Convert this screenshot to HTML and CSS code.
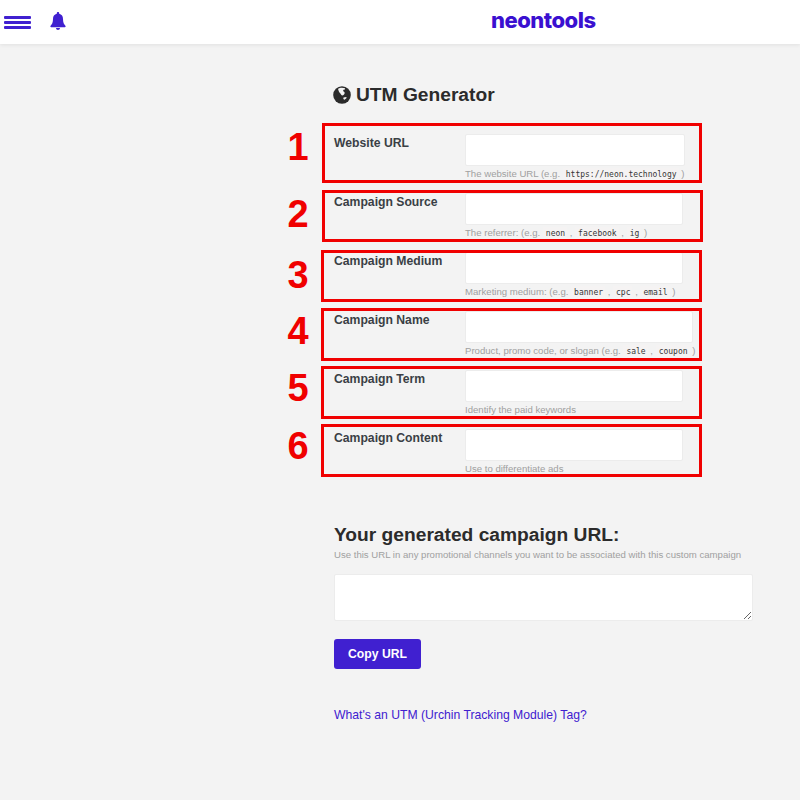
FILE: index.html

```html
<!DOCTYPE html>
<html>
<head>
    <title>UTM Generator - neontools</title>
    <link rel="stylesheet" href="styles.css">
</head>
<body>
    <header class="topbar">
        <div class="menu-icon"><span></span><span></span><span></span></div>
        <svg class="bell" viewBox="0 0 16 18" width="16" height="18">
            <path d="M8 0c-.7 0-1.2.5-1.2 1.2v.6C4.300 2.300 3 4.300 3 7c0 3.600-1 5.300-2.400 6.800-.5.600-.2 1.400.6 1.400h13.600c.8 0 1.100-.8.6-1.400C14 12.300 13 10.600 13 7c0-2.700-1.300-4.700-3.800-5.200v-.6C9.200.5 8.700 0 8 0zM6 16c0 1.100.9 2 2 2s2-.9 2-2z"/>
        </svg>
        <div class="logo">neontools</div>
    </header>

    <main class="content">
        <h1 class="title">
            <svg class="globe" viewBox="0 0 18 18" width="18" height="18">
                <circle cx="9" cy="9" r="8.800" fill="#2b2b2b"/>
                <path fill="#f3f3f3" d="M5 2.800C6.500 1.500 10 1.200 12 2.300c.4 1-.6 1.500-1.600 1.500-.5 1-.2 1.800.9 2.300.8.800.3 2.200-.8 3-1 .6-1.900.3-2.500-.6C7.500 7.300 6.500 7 6 5.800 5.600 4.600 5.200 3.800 5 2.800zM10.500 11.500l2.800-.5.300 1-2 1.800-1.300-.7z"/>
            </svg>
            UTM Generator
        </h1>

        <form class="fields">
            <div class="field">
                <label>Website URL</label>
                <div class="field-body">
                    <input type="text" class="w-220">
                    <p class="help">The website URL (e.g. <code>https://neon.technology</code> )</p>
                </div>
                <div class="mark mark-1"><b>1</b></div>
            </div>
            <div class="field">
                <label>Campaign Source</label>
                <div class="field-body">
                    <input type="text" class="w-218">
                    <p class="help">The referrer: (e.g. <code>neon</code> , <code>facebook</code> , <code>ig</code> )</p>
                </div>
                <div class="mark mark-2"><b>2</b></div>
            </div>
            <div class="field">
                <label>Campaign Medium</label>
                <div class="field-body">
                    <input type="text" class="w-218">
                    <p class="help">Marketing medium: (e.g. <code>banner</code> , <code>cpc</code> , <code>email</code> )</p>
                </div>
                <div class="mark mark-3"><b>3</b></div>
            </div>
            <div class="field">
                <label>Campaign Name</label>
                <div class="field-body">
                    <input type="text" class="w-228">
                    <p class="help">Product, promo code, or slogan (e.g. <code>sale</code> , <code>coupon</code> )</p>
                </div>
                <div class="mark mark-4"><b>4</b></div>
            </div>
            <div class="field">
                <label>Campaign Term</label>
                <div class="field-body">
                    <input type="text" class="w-218">
                    <p class="help">Identify the paid keywords</p>
                </div>
                <div class="mark mark-5"><b>5</b></div>
            </div>
            <div class="field">
                <label>Campaign Content</label>
                <div class="field-body">
                    <input type="text" class="w-218">
                    <p class="help">Use to differentiate ads</p>
                </div>
                <div class="mark mark-6"><b>6</b></div>
            </div>
        </form>

        <section class="result">
            <h2>Your generated campaign URL:</h2>
            <p class="help">Use this URL in any promotional channels you want to be associated with this custom campaign</p>
            <textarea></textarea>
            <button type="button" class="copy-btn">Copy URL</button>
            <a class="utm-link" href="#">What's an UTM (Urchin Tracking Module) Tag?</a>
        </section>
    </main>
</body>
</html>
```

FILE: styles.css

```css
html { background-color: #f3f3f3; }
body { font-family: "Liberation Sans", Arial, sans-serif; margin: 0; background-color: #f3f3f3; color: #363636; overflow: hidden; }

.topbar { position: relative; display: flex; align-items: flex-start; height: 44px; background: white; box-shadow: 0 1px 4px rgba(0,0,0,0.08); }
.menu-icon { display: flex; flex-direction: column; gap: 2px; margin: 16px 0 0 4px; width: 27px; }
.menu-icon span { display: block; height: 3px; background-color: #4020d0; border-radius: 1px; }
.bell { margin: 12px 0 0 19px; fill: #4020d0; }
.logo { margin: 6px 0 0 425px; font-family: Inter, sans-serif; font-weight: 800; font-size: 22px; line-height: 29px; color: #3a10d0; letter-spacing: -0.500px; }

.content { margin-left: 334px; width: 420px; }
.title { display: flex; align-items: center; gap: 5px; margin: 40px 0 0; font-size: 19.200px; line-height: 22px; color: #2b2b2b; }
.globe { flex: none; margin-left: -1px; }

.fields { margin-top: 28px; }
.field { position: relative; display: flex; height: 59px; }
.field label { width: 131px; font-size: 12.200px; font-weight: bold; line-height: 16px; margin-top: 1px; color: #3a3f45; }
.field-body { flex: 1; }
.field input { display: block; box-sizing: border-box; height: 32px; margin: 0; padding: 0 8px; border: 1px solid #ececec; border-radius: 2px; background: white; box-shadow: none; }
.w-218 { width: 218px; }
.w-220 { width: 220px; }
.w-228 { width: 228px; }

.help { margin: 0; font-size: 9.600px; line-height: 16px; color: #a0a0a0; white-space: nowrap; }
code { font-family: "DejaVu Sans Mono", monospace; font-size: 8px; color: #363636; background-color: #f5f3f3; padding: 2px 2px 2px 3px; }

/* numbered red boxes drawn over the form */
.mark { position: absolute; box-sizing: border-box; border: 3px solid #f00000; left: -13px; width: 381px; height: 53px; }
.mark b { position: absolute; left: -41px; top: -1px; width: 30px; text-align: center; font-size: 38px; line-height: 44px; color: #f00000; }
.mark-1 { top: -11px; left: -12px; width: 380px; height: 60px; }
.mark-2 { top: -3px; left: -12px; height: 52px; }
.mark-3 { top: -2px; height: 52px; }
.mark-4 { top: -3px; }
.mark-5 { top: -4px; }
.mark-6 { top: -5px; }
.mark-1 b, .mark-2 b { left: -42px; }
.mark-3 b { top: 0; }
.mark-4 b { top: -2px; }
.mark-5 b, .mark-6 b { top: -3px; }

.result { margin-top: 35px; }
.result h2 { margin: 0; font-size: 19.200px; line-height: 24px; color: #2b2b2b; }
.result textarea { display: block; box-sizing: border-box; width: 419px; height: 47px; margin: 11px 0 0; border: 1px solid #ececec; border-radius: 2px; background: white; }
.copy-btn { display: block; width: 87px; height: 30px; margin-top: 18px; padding: 0; background-color: #4020d0; color: white; border: none; border-radius: 3px; font-family: inherit; font-size: 12.200px; font-weight: bold; }
.utm-link { display: block; margin-top: 38px; font-size: 12.200px; line-height: 16px; color: #4020d0; text-decoration: none; }
```
